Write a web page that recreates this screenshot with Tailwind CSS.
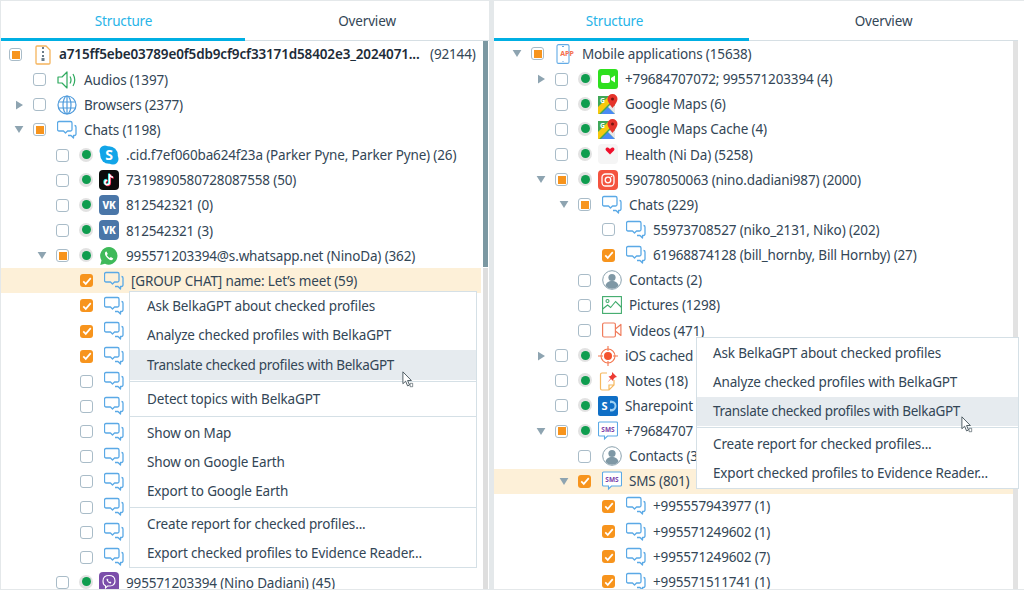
<!DOCTYPE html>
<html lang="en">
<head>
<meta charset="UTF-8" />
<title>Structure</title>
<script src="https://cdn.jsdelivr.net/npm/@tailwindcss/browser@4"></script>
</head>
<body class="bg-[#e4e8ea] font-['Noto_Sans',sans-serif] text-[13.5px] tracking-[-0.15px] text-[#334656] overflow-hidden">

<!-- icon sprites -->
<svg class="hidden">
  <symbol id="i-chat" viewBox="0 0 20 20"><g fill="none" stroke="#5aa9e6" stroke-width="1.300" stroke-linejoin="round"><path d="M2.500 1.500h11a1.500 1.500 0 0 1 1.500 1.500v6.500a1.500 1.500 0 0 1-1.500 1.500h-3l-2 2-2-2h-4.500a1.500 1.500 0 0 1-1.500-1.500v-6.500a1.500 1.500 0 0 1 1.500-1.500z"/><path d="M17.500 5.500a1.500 1.500 0 0 1 1.500 1.500v7a1.500 1.500 0 0 1-1.500 1.500h-1v2.500l-2.500-2.500h-3"/></g></symbol>
  <symbol id="i-audio" viewBox="0 0 20 20"><g fill="none" stroke="#2faa5f" stroke-width="1.200" stroke-linejoin="round"><path d="M1 7h4l5-5v16l-5-5h-4z"/><path d="M13 6.500q2 3.500 0 7M16 4q3.500 6 0 12"/></g></symbol>
  <symbol id="i-globe" viewBox="0 0 20 20"><g fill="none" stroke="#4f9bdc" stroke-width="1.200"><circle cx="10" cy="10" r="9"/><ellipse cx="10" cy="10" rx="4" ry="9"/><path d="M10 1v18M1.500 7h17M1.500 13h17"/></g></symbol>
  <symbol id="i-zip" viewBox="0 0 20 20"><path d="M4 1h9l4 4v13a1 1 0 0 1-1 1h-12a1 1 0 0 1-1-1v-16a1 1 0 0 1 1-1z" fill="none" stroke="#f5b45c" stroke-width="1.300"/><path d="M9 2h2v2h-2zM9 6h2v2h-2zM9 10h2v2h-2zM8.500 13h3v3h-3z" fill="#6b7d8a"/></symbol>
  <symbol id="i-skype" viewBox="0 0 20 20"><circle cx="6" cy="6" r="5.500" fill="#12a5e8"/><circle cx="14" cy="14" r="5.500" fill="#12a5e8"/><circle cx="10" cy="10" r="8.800" fill="#12a5e8"/><text x="10" y="15" text-anchor="middle" font-size="14" font-weight="700" fill="#fff" font-family="Noto Sans">S</text></symbol>
  <symbol id="i-tiktok" viewBox="0 0 20 20"><rect width="20" height="20" rx="4" fill="#0b0b0b"/><path d="M10.500 4v8.500a2.300 2.300 0 1 1-2.300-2.300M10.500 4q.5 3 3.500 3.300" fill="none" stroke="#25f4ee" stroke-width="1.700" transform="translate(-.7 -.5)"/><path d="M10.500 4v8.500a2.300 2.300 0 1 1-2.300-2.300M10.500 4q.5 3 3.500 3.300" fill="none" stroke="#fe2c55" stroke-width="1.700" transform="translate(.7 .5)"/><path d="M10.500 4v8.500a2.300 2.300 0 1 1-2.300-2.300M10.500 4q.5 3 3.500 3.300" fill="none" stroke="#fff" stroke-width="1.500"/></symbol>
  <symbol id="i-vk" viewBox="0 0 20 20"><rect width="20" height="20" rx="4" fill="#4a76a8"/><text x="10" y="13.500" text-anchor="middle" font-size="10" font-weight="800" fill="#fff" font-family="Noto Sans">VK</text></symbol>
  <symbol id="i-whatsapp" viewBox="0 0 20 20"><path d="M10 1a8.800 8.800 0 0 0-7.500 13.400l-1.300 4.600 4.800-1.200a8.800 8.800 0 1 0 4-16.800z" fill="#3fba5a"/><path d="M7 5.500c-1.500 1-1.500 3 .5 5.500s4.500 4 6 2.800l.8-1.300-2.500-1.400-1 1c-1-.3-2.700-2-3-3l1-1-1.300-2.600z" fill="#fff"/></symbol>
  <symbol id="i-viber" viewBox="0 0 20 20"><rect width="20" height="20" rx="4" fill="#7b4eaa"/><path d="M10 3.500c-3.500 0-6 1.200-6 5.500 0 2.800 1 4.200 2.500 4.800v2.200l2-2c3.500.3 7.500-.3 7.500-5 0-4.300-2.500-5.500-6-5.500z" fill="none" stroke="#fff" stroke-width="1.100"/><path d="M8 6.500c-.8.600-.5 1.800.7 3.200s2.400 2.100 3.200 1.500l.5-.8-1.300-.9-.6.500c-.6-.2-1.300-1-1.500-1.600l.5-.6z" fill="#fff"/></symbol>
  <symbol id="i-facetime" viewBox="0 0 20 20"><rect width="20" height="20" rx="3" fill="#2fe01f"/><rect x="3" y="6" width="9" height="8" rx="2" fill="#fff"/><path d="M13 9l4-2.500v7l-4-2.500z" fill="#fff"/></symbol>
  <symbol id="i-maps" viewBox="0 0 20 20"><rect y="2" width="17" height="18" fill="#3fa757"/><path d="M0 13l11-11h6v2l-16 16h-1z" fill="#f6c90e"/><path d="M3 20l7-7 7 7z" fill="#4a8af4"/><path d="M10 13l7 7v-8l-3-3z" fill="#e8e8e8"/><text x="4.500" y="8.500" text-anchor="middle" font-size="7" font-weight="700" fill="#fff" font-family="Noto Sans">G</text><path d="M14.500 0a5 5 0 0 0-5 5c0 3.300 5 9 5 9s5-5.700 5-9a5 5 0 0 0-5-5z" fill="#e5342b"/><circle cx="14.500" cy="5" r="1.500" fill="#7a1510"/></symbol>
  <symbol id="i-health" viewBox="0 0 20 20"><rect width="20" height="20" rx="4" fill="#f5f5f5"/><path d="M12 9.500l-4-4c-1-1.200-.2-3 1.300-3 .8 0 2 .6 2.700 1.500.7-.9 1.900-1.500 2.700-1.500 1.500 0 2.300 1.800 1.300 3z" fill="#f0102c" transform="translate(0 1)"/></symbol>
  <symbol id="i-insta" viewBox="0 0 20 20"><rect width="20" height="20" rx="4" fill="#f4533f"/><rect x="4" y="4" width="12" height="12" rx="3.500" fill="none" stroke="#fff" stroke-width="1.300"/><circle cx="10" cy="10" r="2.800" fill="none" stroke="#fff" stroke-width="1.300"/><circle cx="13.500" cy="6.500" r=".8" fill="#fff"/></symbol>
  <symbol id="i-contact" viewBox="0 0 20 20"><circle cx="10" cy="10" r="9.300" fill="#fff" stroke="#8ba2ae" stroke-width="1"/><circle cx="10" cy="7.500" r="3.600" fill="#7f98a5"/><path d="M3.500 16c.5-3.500 3-5 6.500-5s6 1.500 6.500 5a9 9 0 0 1-13 0z" fill="#7f98a5"/></symbol>
  <symbol id="i-picture" viewBox="0 0 20 20"><g fill="none" stroke="#3fab6b" stroke-width="1.100"><rect x=".6" y="1.600" width="18.800" height="16.800"/><circle cx="5.500" cy="6" r="1.500"/><path d="M.6 14l5-4 3 2.500 5-6 6 6"/></g></symbol>
  <symbol id="i-video" viewBox="0 0 20 20"><g fill="none" stroke="#f07c5c" stroke-width="1.200" stroke-linejoin="round"><rect x=".6" y="3" width="12.800" height="14" rx="1.500"/><path d="M13.400 9l5.500-4.500v11l-5.500-4.500"/></g></symbol>
  <symbol id="i-target" viewBox="0 0 20 20"><circle cx="10" cy="10" r="4" fill="#f4532e"/><g fill="none" stroke="#f4764e" stroke-width="1.100"><circle cx="10" cy="10" r="7"/><path d="M10 0v5M10 15v5M0 10h5M15 10h5"/></g></symbol>
  <symbol id="i-notes" viewBox="0 0 20 20"><path d="M9 2h-5a1.500 1.500 0 0 0-1.500 1.500v14a1.500 1.500 0 0 0 1.500 1.500h7l5-5v-5M11 19v-5h5" fill="none" stroke="#f6b85e" stroke-width="1.200"/><path d="M14 1l5 5-2 .5-1.500 1.500-.5 2-2-2-3.500 3.500 3-4-2-2 2-.5 1.500-1.500z" fill="#ec3b34"/></symbol>
  <symbol id="i-share" viewBox="0 0 20 20"><rect width="20" height="20" rx="2" fill="#0f6fc6"/><circle cx="13" cy="10" r="5.500" fill="#9dd0f2"/><circle cx="13.500" cy="10" r="3" fill="#0f6fc6"/><rect x="1" y="4" width="11" height="12" fill="#0f6fc6"/><text x="6.500" y="14" text-anchor="middle" font-size="11" font-weight="700" fill="#fff" font-family="Noto Sans">S</text></symbol>
  <symbol id="i-sms" viewBox="0 0 20 20"><path d="M1.500 1h17a1 1 0 0 1 1 1v12a1 1 0 0 1-1 1h-9l-3 3v-3h-5a1 1 0 0 1-1-1v-12a1 1 0 0 1 1-1z" fill="#fff" stroke="#5aa9e6" stroke-width="1.100"/><text x="10" y="10.500" text-anchor="middle" font-size="6.500" font-weight="700" letter-spacing="0" fill="#7b3fa8" font-family="Noto Sans">SMS</text></symbol>
  <symbol id="i-app" viewBox="0 0 20 20"><rect x="2" y=".6" width="12" height="18.800" rx="1.500" fill="#fff" stroke="#62abe6" stroke-width="1.100"/><path d="M7 2.500h2M7.500 17.500h1" stroke="#62abe6"/><text x="12" y="12" text-anchor="middle" font-size="7" font-weight="700" letter-spacing="0" fill="#f4704f" font-family="Noto Sans">APP</text></symbol>
  <symbol id="i-cursor" viewBox="0 0 14 20"><path d="M1 1v14l3.200-3 2.300 5.500 2.300-1-2.300-5.300h4.500z" fill="#fff" stroke="#37474f" stroke-width="1"/><path d="M9.500 14.500h3v4h-3z" fill="#fff" stroke="#37474f" stroke-width=".7"/></symbol>
</svg>

<div class="flex h-[590px] pt-px pb-px pl-px">
  <!-- left panel -->
  <section class="w-[488px] h-full bg-white flex flex-col relative">
    <div class="flex h-[40px] shrink-0 border-b border-[#d6dfe4]">
      <div class="w-[244px] pl-px pt-[3px] flex items-center justify-center border-b-[3px] border-[#00afe3] text-[#27b4e8] mb-[-1px]">Structure</div>
      <div class="flex-1 flex items-center justify-center pt-px">Overview</div>
    </div>
    <div class="flex flex-1 min-h-0">
      <div id="tree-left" class="flex-1 overflow-hidden pt-px pr-[2px]"></div>
      <div class="w-[5px] mr-px bg-[#dedede]"><div class="h-[226px] bg-[#7b98a2]"></div><div class="h-px bg-white"></div></div>
    </div>
    <div class="absolute left-[128px] top-[290px] w-[348px] h-[277px] bg-white border border-[#d5e0e6] flex flex-col">
      <div class="h-[29px] shrink-0 flex items-center pl-[17px]">Ask BelkaGPT about checked profiles</div>
      <div class="h-[29px] shrink-0 flex items-center pl-[17px]">Analyze checked profiles with BelkaGPT</div>
      <div class="h-[30px] shrink-0 flex items-center pl-[17px] bg-[#e6ebef] tracking-[-0.3px]">Translate checked profiles with BelkaGPT</div>
      <div class="h-px shrink-0 bg-[#d5e0e6] my-px"></div>
      <div class="h-[32px] shrink-0 flex items-center pl-[17px]">Detect topics with BelkaGPT</div>
      <div class="h-px shrink-0 bg-[#d5e0e6] mt-px mb-[2px]"></div>
      <div class="h-[29px] shrink-0 flex items-center pl-[17px]">Show on Map</div>
      <div class="h-[29px] shrink-0 flex items-center pl-[17px]">Show on Google Earth</div>
      <div class="h-[29px] shrink-0 flex items-center pl-[17px]">Export to Google Earth</div>
      <div class="h-px shrink-0 bg-[#d5e0e6] mt-px mb-[2px]"></div>
      <div class="h-[29px] shrink-0 flex items-center pl-[17px]">Create report for checked profiles...</div>
      <div class="h-[29px] shrink-0 flex items-center pl-[17px]">Export checked profiles to Evidence Reader...</div>
    </div>
    <svg class="absolute left-[401px] top-[370px] w-[12px] h-[17px]"><use href="#i-cursor"/></svg>
  </section>

  <div class="w-[5px]"></div>

  <!-- right panel -->
  <section class="flex-1 h-full bg-white flex flex-col relative">
    <div class="flex h-[40px] shrink-0 mr-[6px] border-b border-[#d6dfe4]">
      <div class="w-[255px] pr-[14px] pt-[3px] flex items-center justify-center border-b-[3px] border-[#00afe3] text-[#27b4e8] mb-[-1px]">Structure</div>
      <div class="flex-1 flex items-center justify-center pt-px">Overview</div>
    </div>
    <div class="flex flex-1 min-h-0">
      <div id="tree-right" class="flex-1 overflow-hidden pt-[0.4px]"></div>
      <div class="w-[5px] mr-[6px] bg-[#e2e2e2]"></div>
    </div>
    <div class="absolute left-[202px] top-[336px] w-[323px] h-[152px] pt-px bg-white border border-[#d5e0e6] flex flex-col">
      <div class="h-[29px] shrink-0 flex items-center pl-[16px]">Ask BelkaGPT about checked profiles</div>
      <div class="h-[29px] shrink-0 flex items-center pl-[16px]">Analyze checked profiles with BelkaGPT</div>
      <div class="h-[29px] shrink-0 flex items-center pl-[16px] bg-[#e6ebef] tracking-[-0.3px]">Translate checked profiles with BelkaGPT</div>
      <div class="h-px shrink-0 bg-[#d5e0e6] mt-px mb-[2px]"></div>
      <div class="h-[29px] shrink-0 flex items-center pl-[16px]">Create report for checked profiles...</div>
      <div class="h-[29px] shrink-0 flex items-center pl-[16px]">Export checked profiles to Evidence Reader...</div>
    </div>
    <svg class="absolute left-[467px] top-[415px] w-[12px] h-[17px]"><use href="#i-cursor"/></svg>
  </section>
</div>

<script>
  // row: [checkbox centre x, arrow, check state, has dot, icon, text, highlighted]
  const leftRows = [
    [15, '', 'part', 0, 'zip', 'root'],
    [39, '', 'off', 0, 'audio', 'Audios (1397)'],
    [39, 'r', 'off', 0, 'globe', 'Browsers (2377)'],
    [39, 'd', 'part', 0, 'chat', 'Chats (1198)'],
    [62, '', 'off', 1, 'skype', '.cid.f7ef060ba624f23a (Parker Pyne, Parker Pyne) (26)'],
    [62, '', 'off', 1, 'tiktok', '7319890580728087558 (50)'],
    [62, '', 'off', 1, 'vk', '812542321 (0)'],
    [62, '', 'off', 1, 'vk', '812542321 (3)'],
    [62, 'd', 'part', 1, 'whatsapp', '995571203394@s.whatsapp.net (NinoDa) (362)'],
    [86, '', 'on', 0, 'chat', '[GROUP CHAT] name: Let\u2019s meet (59)', 1],
    [86, '', 'on', 0, 'chat', ''],
    [86, '', 'on', 0, 'chat', ''],
    [86, '', 'on', 0, 'chat', ''],
    [86, '', 'off', 0, 'chat', ''],
    [86, '', 'off', 0, 'chat', ''],
    [86, '', 'off', 0, 'chat', ''],
    [86, '', 'off', 0, 'chat', ''],
    [86, '', 'off', 0, 'chat', ''],
    [86, '', 'off', 0, 'chat', ''],
    [86, '', 'off', 0, 'chat', ''],
    [86, '', 'off', 0, 'chat', ''],
    [62, '', 'off', 1, 'viber', '995571203394 (Nino Dadiani) (45)'],
  ];
  const rightRows = [
    [44, 'd', 'part', 0, 'app', 'Mobile applications (15638)'],
    [68, 'r', 'off', 1, 'facetime', '+79684707072; 995571203394 (4)'],
    [68, '', 'off', 1, 'maps', 'Google Maps (6)'],
    [68, '', 'off', 1, 'maps', 'Google Maps Cache (4)'],
    [68, '', 'off', 1, 'health', 'Health (Ni Da) (5258)'],
    [68, 'd', 'part', 1, 'insta', '59078050063 (nino.dadiani987) (2000)'],
    [91, 'd', 'part', 0, 'chat', 'Chats (229)'],
    [115, '', 'off', 0, 'chat', '55973708527 (niko_2131, Niko) (202)'],
    [115, '', 'on', 0, 'chat', '61968874128 (bill_hornby, Bill Hornby) (27)'],
    [91, '', 'off', 0, 'contact', 'Contacts (2)'],
    [91, '', 'off', 0, 'picture', 'Pictures (1298)'],
    [91, '', 'off', 0, 'video', 'Videos (471)'],
    [68, 'r', 'off', 1, 'target', 'iOS cached'],
    [68, '', 'off', 1, 'notes', 'Notes (18)'],
    [68, '', 'off', 1, 'share', 'Sharepoint'],
    [68, 'd', 'part', 1, 'sms', '+79684707'],
    [91, '', 'off', 0, 'contact', 'Contacts (3'],
    [91, 'd', 'on', 0, 'sms', 'SMS (801)', 1],
    [115, '', 'on', 0, 'chat', '+995557943977 (1)'],
    [115, '', 'on', 0, 'chat', '+995571249602 (1)'],
    [115, '', 'on', 0, 'chat', '+995571249602 (7)'],
    [115, '', 'on', 0, 'chat', '+995571511741 (1)'],
  ];

  const checkOff = '<span class="w-[13px] h-[13px] rounded-[3px] border-[1.5px] border-[#a9bcc8] bg-white"></span>';
  const checkPart = '<span class="w-[13px] h-[13px] rounded-[3px] border-[1.5px] border-[#a9bcc8] bg-white flex items-center justify-center"><span class="w-[8px] h-[8px] bg-[#f7941d]"></span></span>';
  const checkOn = '<span class="w-[13px] h-[13px] rounded-[3px] bg-[#f7941d] flex items-center justify-center"><svg viewBox="0 0 12 12" class="w-[10px] h-[10px]"><path d="M1.500 6.500l3 3 6-7" fill="none" stroke="#fff" stroke-width="2"/></svg></span>';
  const checks = { off: checkOff, part: checkPart, on: checkOn };
  const arrows = {
    '': '',
    r: '<svg viewBox="0 0 8 10" class="w-[7px] h-[10px]"><path d="M0 0l8 5-8 5z" fill="#8ea4b1"/></svg>',
    d: '<svg viewBox="0 0 10 8" class="w-[10px] h-[7px]"><path d="M0 0h10l-5 8z" fill="#8ea4b1"/></svg>',
  };
  const dot = '<span class="absolute left-[23px] top-[5px] w-[14px] h-[14px] rounded-full bg-[#e2e2e2] flex items-center justify-center"><span class="w-[9px] h-[9px] rounded-full bg-[#0f9d4f]"></span></span>';

  function renderRow(r) {
    const [cx, arrow, check, hasDot, icon, text, hl] = r;
    const iconLeft = hasDot ? 43 : (text === 'root' ? 23.5 : 24);
    const textLeft = hasDot ? 64 : (text === 'root' ? 44 : 45);
    const label = text === 'root'
      ? '<span class="font-semibold text-[#1c2b38] whitespace-nowrap w-[371px]">a715ff5ebe03789e0f5db9cf9cf33171d58402e3_2024071...</span><span>(92144)</span>'
      : '<span class="whitespace-nowrap leading-[14px]">' + text + '</span>';
    return '<div class="h-[25.15px] flex items-center relative ' + (hl ? 'bg-[#fdf0d8]' : '') + '">'
      + '<span class="absolute top-0 bottom-0 w-[14px] flex items-center justify-center" style="left:' + (cx - 28) + 'px">' + arrows[arrow] + '</span>'
      + '<span class="absolute top-[6px] flex" style="left:' + (cx - 7) + 'px">' + checks[check] + '</span>'
      + '<span class="absolute top-0 bottom-0" style="left:' + (cx - 7) + 'px">' + (hasDot ? dot : '') + '</span>'
      + '<svg class="absolute top-[2.5px] w-[20px] h-[20px]" style="left:' + (cx + iconLeft - 7) + 'px"><use href="#i-' + icon + '"/></svg>'
      + (text ? '<span class="absolute top-0 bottom-0 flex items-center" style="left:' + (cx + textLeft - 1) + 'px">' + label + '</span>' : '')
      + '</div>';
  }
  document.getElementById('tree-left').innerHTML = leftRows.map(renderRow).join('');
  document.getElementById('tree-right').innerHTML = rightRows.map(renderRow).join('');
</script>
</body>
</html>
